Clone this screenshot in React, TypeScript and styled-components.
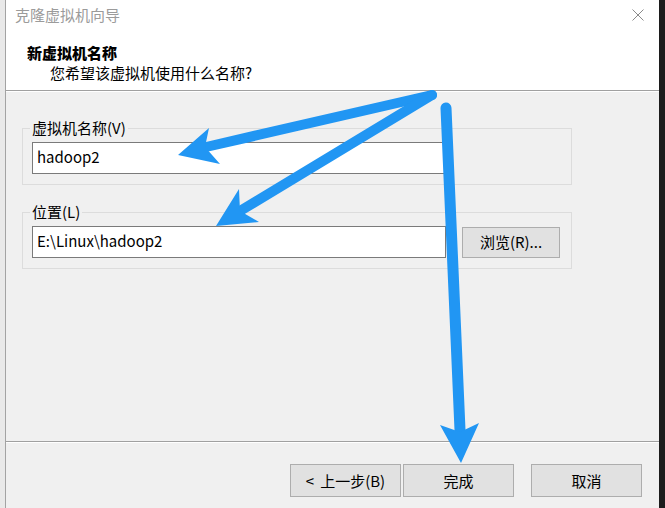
import React from "react";
import styled, { createGlobalStyle } from "styled-components";

const GlobalStyle = createGlobalStyle`
  html, body {
    margin: 0;
    padding: 0;
    background: #1c1c1c;
  }
  body {
    font-family: "Noto Sans CJK SC", "Noto Sans", sans-serif;
    font-size: 15px;
    color: #000;
  }
  * { box-sizing: border-box; }
`;

const Page = styled.div`
  position: relative;
  width: 665px;
  height: 508px;
  display: flex;
  overflow: hidden;
`;

const LeftEdge = styled.div`
  width: 5px;
  background: #e9e9e9;
`;

const RightEdge = styled.div`
  width: 6px;
  background: #1c1c1c;
`;

const Window = styled.div`
  width: 654px;
  border-left: 1px solid #a3a3a3;
  background: #f0f0f0;
  display: flex;
  flex-direction: column;
`;

const Header = styled.div`
  height: 90px;
  background: #fff;
  display: flex;
  flex-direction: column;
`;

const TitleBar = styled.div`
  height: 30px;
  display: flex;
  align-items: center;
  justify-content: space-between;
  padding: 0 15px 0 9px;
`;

const TitleText = styled.span`
  color: #9b9b9b;
  font-size: 15px;
  line-height: 20px;
`;

const CloseIcon = styled.svg`
  width: 12px;
  height: 12px;
  display: block;
`;

const HeaderContent = styled.div`
  margin-top: 13px;
  padding-left: 21px;
  display: flex;
  flex-direction: column;
`;

const PageTitle = styled.div`
  font-weight: 900;
  font-size: 15px;
  line-height: 20px;
`;

const PageSubtitle = styled.div`
  padding-left: 23px;
  font-size: 15px;
  line-height: 20px;
`;

const Separator = styled.div`
  height: 2px;
  border-top: 1px solid #a0a0a0;
  border-bottom: 1px solid #ffffff;
`;

const Body = styled.div`
  flex: 1;
  padding: 26px 0 0 16px;
  display: flex;
  flex-direction: column;
`;

const Group = styled.fieldset<{ $gap?: number }>`
  width: 550px;
  margin: ${(p) => p.$gap ?? 0}px 0 0 0;
  padding: 4px 10px 10px 9px;
  border: 1px solid #dcdcdc;
  min-width: 0;
`;

const Legend = styled.legend`
  padding: 0 2px;
  margin-left: -2px;
  font-size: 15px;
  line-height: 20px;
`;

const Row = styled.div`
  display: flex;
  align-items: center;
`;

const TextInput = styled.div`
  width: 414px;
  height: 32px;
  border: 1px solid #7a7a7a;
  background: #fff;
  padding-left: 4px;
  display: flex;
  align-items: center;
  font-size: 15px;
  line-height: 20px;
  padding-bottom: 3px;
`;

const Button = styled.div<{ $w: number; $h: number; $ml?: number }>`
  width: ${(p) => p.$w}px;
  height: ${(p) => p.$h}px;
  margin-left: ${(p) => p.$ml ?? 0}px;
  background: #e1e1e1;
  border: 1px solid #adadad;
  display: flex;
  align-items: center;
  justify-content: center;
  gap: 6px;
  font-size: 15px;
  line-height: 20px;
`;

const Footer = styled.div`
  height: 65px;
  display: flex;
  justify-content: flex-end;
  align-items: flex-start;
  padding: 21px 17px 0 0;
`;

const Overlay = styled.svg`
  position: absolute;
  left: 0;
  top: 0;
  width: 665px;
  height: 508px;
  pointer-events: none;
`;

const BLUE = "#2196f3";

export default function App() {
  return (
    <>
      <GlobalStyle />
      <Page>
        <LeftEdge />
        <Window>
          <Header>
            <TitleBar>
              <TitleText>克隆虚拟机向导</TitleText>
              <CloseIcon viewBox="0 0 12 12">
                <path d="M0.5 0.5 L11.5 11.5 M11.5 0.5 L0.5 11.5" stroke="#8a8a8a" strokeWidth="1" fill="none" />
              </CloseIcon>
            </TitleBar>
            <HeaderContent>
              <PageTitle>新虚拟机名称</PageTitle>
              <PageSubtitle>您希望该虚拟机使用什么名称?</PageSubtitle>
            </HeaderContent>
          </Header>
          <Separator />
          <Body>
            <Group>
              <Legend>虚拟机名称(V)</Legend>
              <Row>
                <TextInput>hadoop2</TextInput>
              </Row>
            </Group>
            <Group $gap={17}>
              <Legend>位置(L)</Legend>
              <Row>
                <TextInput>E:\Linux\hadoop2</TextInput>
                <Button $w={98} $h={31} $ml={16}>浏览(R)...</Button>
              </Row>
            </Group>
          </Body>
          <Separator />
          <Footer>
            <Button $w={111} $h={33}>
              <span>&lt;</span>
              <span>上一步(B)</span>
            </Button>
            <Button $w={111} $h={33} $ml={2}>完成</Button>
            <Button $w={111} $h={33} $ml={17}>取消</Button>
          </Footer>
        </Window>
        <RightEdge />
        <Overlay viewBox="0 0 665 508">
          <line x1="432" y1="95" x2="206" y2="147" stroke={BLUE} strokeWidth="10" strokeLinecap="round" />
          <polygon points="178,155 209,128 205,147 220,164" fill={BLUE} />
          <line x1="432" y1="95" x2="240" y2="211" stroke={BLUE} strokeWidth="10" strokeLinecap="round" />
          <polygon points="216,226 239,189 240,211 259,222" fill={BLUE} />
          <line x1="446" y1="108" x2="460" y2="430" stroke={BLUE} strokeWidth="11" strokeLinecap="round" />
          <polygon points="461,463 440,425 460,432 479,423" fill={BLUE} />
        </Overlay>
      </Page>
    </>
  );
}
